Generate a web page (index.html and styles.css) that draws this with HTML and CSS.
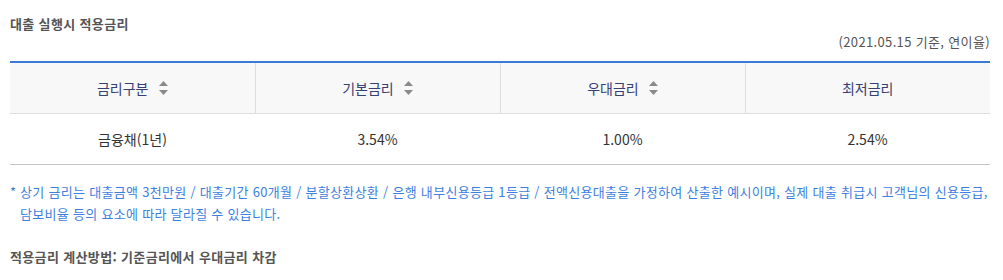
FILE: index.html
```html
<!DOCTYPE html>
<html lang="ko">
<head>
<meta charset="utf-8">
<link rel="stylesheet" href="styles.css">
</head>
<body>
<div class="wrap">
  <h3 class="title">대출 실행시 적용금리</h3>
  <p class="basis">(2021.05.15 기준, 연이율)</p>
  <table class="rates">
    <thead>
      <tr>
        <th><span class="th-in">금리구분<span class="sort"><svg width="9" height="14" viewBox="0 0 9 14"><polygon points="4.5,0 9,5 0,5" fill="#8a8a8a"/><polygon points="0,9 9,9 4.5,14" fill="#8a8a8a"/></svg></span></span></th>
        <th><span class="th-in">기본금리<span class="sort"><svg width="9" height="14" viewBox="0 0 9 14"><polygon points="4.5,0 9,5 0,5" fill="#8a8a8a"/><polygon points="0,9 9,9 4.5,14" fill="#8a8a8a"/></svg></span></span></th>
        <th><span class="th-in">우대금리<span class="sort"><svg width="9" height="14" viewBox="0 0 9 14"><polygon points="4.5,0 9,5 0,5" fill="#8a8a8a"/><polygon points="0,9 9,9 4.5,14" fill="#8a8a8a"/></svg></span></span></th>
        <th><span class="th-in">최저금리</span></th>
      </tr>
    </thead>
    <tbody>
      <tr>
        <td>금융채(1년)</td>
        <td>3.54%</td>
        <td>1.00%</td>
        <td>2.54%</td>
      </tr>
    </tbody>
  </table>
  <p class="note"><span class="star">*</span>상기 금리는 대출금액 3천만원 / 대출기간 60개월 / 분할상환상환 / 은행 내부신용등급 1등급 / 전액신용대출을 가정하여 산출한 예시이며, 실제 대출 취급시 고객님의 신용등급, 담보비율 등의 요소에 따라 달라질 수 있습니다.</p>
  <p class="method">적용금리 계산방법: 기준금리에서 우대금리 차감</p>
</div>
</body>
</html>
```
FILE: styles.css
```css
html, body {
  margin: 0;
  padding: 0;
  background: #fff;
}
body {
  font-family: "Noto Sans CJK KR", "Noto Sans", sans-serif;
  color: #333;
}
.wrap {
  width: 980px;
  padding: 0 0 0 10px;
}
.title {
  margin: 0;
  padding-top: 14px;
  font-size: 13px;
  line-height: 20px;
  font-weight: bold;
  color: #555;
  letter-spacing: 0.35px;
}
.basis {
  margin: -1px 0 10px 0;
  text-align: right;
  font-size: 13px;
  line-height: 18px;
  color: #555;
  letter-spacing: 0.35px;
}
.rates {
  width: 980px;
  border-collapse: collapse;
  table-layout: fixed;
  border-top: 2px solid #3a7bd5;
}
.rates th {
  height: 50px;
  padding: 0;
  background: #f8f8f8;
  border-bottom: 1px solid #dedede;
  border-left: 1px solid #dedede;
  font-weight: normal;
  font-size: 14px;
  color: #364072;
  text-align: center;
}
.rates th:first-child {
  border-left: none;
}
.th-in {
  display: inline-flex;
  align-items: center;
  gap: 10px;
}
.sort {
  display: inline-flex;
}
.sort svg {
  display: block;
}
.rates td {
  height: 50px;
  padding: 0;
  border-bottom: 1px solid #c4c4c4;
  text-align: center;
  font-size: 14px;
  color: #333;
}
.note {
  margin: 16px 0 0 0;
  padding-left: 10px;
  position: relative;
  font-size: 13px;
  line-height: 22px;
  color: #3d7fe0;
  letter-spacing: 0.3px;
  word-break: keep-all;
}
.star {
  position: absolute;
  left: 0;
  top: 0;
}
.method {
  margin: 22px 0 0 0;
  font-size: 13px;
  line-height: 20px;
  font-weight: bold;
  color: #555;
  letter-spacing: 0.35px;
}
```
